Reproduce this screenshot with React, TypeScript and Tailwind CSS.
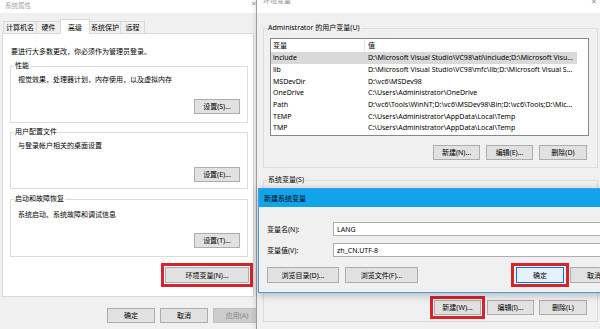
import type { ReactNode } from "react";

const userVars = [
  { name: "include", value: "D:\\Microsoft Visual Studio\\VC98\\atl\\include;D:\\Microsoft Visu...", selected: true },
  { name: "lib", value: "D:\\Microsoft Visual Studio\\VC98\\mfc\\lib;D:\\Microsoft Visual S..." },
  { name: "MSDevDir", value: "D:\\vc6\\MSDev98" },
  { name: "OneDrive", value: "C:\\Users\\Administrator\\OneDrive" },
  { name: "Path", value: "D:\\vc6\\Tools\\WinNT;D:\\vc6\\MSDev98\\Bin;D:\\vc6\\Tools;D:\\Mic..." },
  { name: "TEMP", value: "C:\\Users\\Administrator\\AppData\\Local\\Temp" },
  { name: "TMP", value: "C:\\Users\\Administrator\\AppData\\Local\\Temp" },
];

interface BtnProps {
  label: string;
  className?: string;
  disabled?: boolean;
  focused?: boolean;
}

const Btn = ({ label, className = "", disabled, focused }: BtnProps) => {
  const look = disabled
    ? "bg-[#cccccc] border-[#bfbfbf] text-[#8a8a8a]"
    : focused
      ? "bg-[#e5f1fb] border-[#0078d7] text-black"
      : "bg-[#e1e1e1] border-[#adadad] text-black";
  return (
    <div className={`flex shrink-0 items-center justify-center border text-[7px] leading-none ${look} ${className}`}>
      {label}
    </div>
  );
};

// red highlight frame drawn round a button
const RedBox = ({ children, className = "" }: { children: ReactNode; className?: string }) => (
  <div className={`flex shrink-0 items-center justify-center border-[3px] border-[#d8232a] ${className}`}>{children}</div>
);

const Group = ({ title, className = "", children }: { title: string; className?: string; children: ReactNode }) => (
  <fieldset className={`border border-[#dcdcdc] ${className}`}>
    <legend className="ml-[3px] px-[1px] text-[7px] leading-[10px]">{title}</legend>
    <div className="flex flex-col">{children}</div>
  </fieldset>
);

const tabs = [
  { label: "计算机名", w: "w-[34px]" },
  { label: "硬件", w: "w-[25px]" },
  { label: "高级", w: "w-[30px]", active: true },
  { label: "系统保护", w: "w-[32px]" },
  { label: "远程", w: "w-[25px]" },
];

const SystemProperties = () => (
  <div className="absolute left-0 top-0 flex h-[329px] w-[262px] flex-col bg-[#f0f0f0]">
    <div className="flex h-[13px] items-center justify-between bg-white pl-[5px] pr-[5px]">
      <span className="text-[6.5px] leading-none text-[#a3a3a3]">系统属性</span>
      <span className="-mt-[6px] text-[7px] leading-none text-[#a3a3a3]">✕</span>
    </div>

    <div className="flex h-[20px] items-end pl-[3px]">
      {tabs.map((t, i) =>
        t.active ? (
          <div
            key={t.label}
            className={`relative z-10 -mb-px flex h-[15px] items-center justify-center border border-b-0 border-[#d9d9d9] bg-white text-[7px] leading-none ${t.w} ${i ? "-ml-px" : ""}`}
          >
            {t.label}
          </div>
        ) : (
          <div
            key={t.label}
            className={`flex h-[12px] items-center justify-center border border-b-0 border-[#d9d9d9] bg-[#f0f0f0] text-[7px] leading-none ${t.w} ${i ? "-ml-px" : ""}`}
          >
            {t.label}
          </div>
        ),
      )}
    </div>

    <div className="ml-[2px] flex h-[264px] w-[252px] flex-col border border-[#d9d9d9] bg-white">
      <p className="ml-[8px] mt-[13px] h-[10px] text-[7px] leading-[10px]">要进行大多数更改，你必须作为管理员登录。</p>

      <Group title="性能" className="ml-[7px] mt-[4px] w-[238px]">
        <p className="ml-[7px] mt-[4px] h-[10px] text-[7px] leading-[10px]">视觉效果，处理器计划，内存使用，以及虚拟内存</p>
        <Btn label="设置(S)..." className="mb-[8px] mr-[7px] mt-[14px] h-[15px] w-[46px] self-end" />
      </Group>

      <Group title="用户配置文件" className="ml-[7px] mt-[4px] w-[238px]">
        <p className="ml-[7px] mt-[4px] h-[10px] text-[7px] leading-[10px]">与登录帐户相关的桌面设置</p>
        <Btn label="设置(E)..." className="mb-[6px] mr-[7px] mt-[16px] h-[15px] w-[46px] self-end" />
      </Group>

      <Group title="启动和故障恢复" className="ml-[7px] mt-[5px] w-[238px]">
        <p className="ml-[7px] mt-[6px] h-[10px] text-[7px] leading-[10px]">系统启动、系统故障和调试信息</p>
        <Btn label="设置(T)..." className="mb-[8px] mr-[7px] mt-[13px] h-[15px] w-[46px] self-end" />
      </Group>

      <RedBox className="ml-[158px] mt-[6px] h-[24px] w-[92px]">
        <Btn label="环境变量(N)..." className="h-[16px] w-[84px]" />
      </RedBox>
    </div>

    <div className="ml-[107px] mt-[11px] flex gap-[5px]">
      <Btn label="确定" className="h-[15px] w-[48px]" />
      <Btn label="取消" className="h-[15px] w-[48px]" />
      <Btn label="应用(A)" className="h-[15px] w-[48px]" disabled />
    </div>
  </div>
);

const EnvVariables = () => (
  <div className="absolute left-[256px] top-0 flex h-[329px] w-[350px] flex-col border-l border-[#9c9c9c] bg-[#f0f0f0] shadow-[-2px_0_4px_rgba(0,0,0,0.08)]">
    <div className="flex h-[13px] items-start justify-between overflow-hidden bg-white pl-[6px] pr-[9px]">
      <span className="-mt-[4px] text-[7px] leading-[10px] text-[#8c8c8c]">环境变量</span>
      <span className="-mt-[3px] text-[7px] leading-[10px] text-[#8c8c8c]">✕</span>
    </div>

    <div className="flex flex-col pl-[6px]">
      <Group title="Administrator 的用户变量(U)" className="mt-[10px] w-[335px]">
        <div className="ml-[6px] mt-[5px] h-[98px] w-[319px] overflow-hidden border border-[#828790] bg-white text-[7px] leading-none">
          <div className="flex h-[13px] w-[306px] items-center">
            <span className="flex h-full w-[94px] items-center border-r border-[#e5e5e5] pl-[2px]">变量</span>
            <span className="pl-[3px]">值</span>
          </div>
          {userVars.map((v) => (
            <div
              key={v.name}
              className={`flex h-[11.7px] w-[306px] items-center whitespace-nowrap ${v.selected ? "bg-[#d9d9d9]" : ""}`}
            >
              <span className="w-[94px] shrink-0 pl-[2px]">{v.name}</span>
              <span className="pl-[3px]">{v.value}</span>
            </div>
          ))}
        </div>
        <div className="mb-[7px] ml-[169px] mt-[9px] flex gap-[6px]">
          <Btn label="新建(N)..." className="h-[15px] w-[47px]" />
          <Btn label="编辑(E)..." className="h-[15px] w-[47px]" />
          <Btn label="删除(D)" className="h-[15px] w-[48px]" />
        </div>
      </Group>

      <Group title="系统变量(S)" className="mt-[7px] w-[335px]">
        <div className="h-[111px]" />
        <div className="mb-[2px] ml-[166px] flex items-center">
          <RedBox className="h-[23px] w-[55px]">
            <Btn label="新建(W)..." className="h-[15px] w-[47px]" />
          </RedBox>
          <Btn label="编辑(I)..." className="ml-[2px] h-[15px] w-[47px]" />
          <Btn label="删除(L)" className="ml-[5px] h-[15px] w-[48px]" />
        </div>
      </Group>
    </div>
  </div>
);

const NewVariableDialog = () => (
  <div className="absolute left-[258px] top-[188px] flex h-[105px] w-[360px] flex-col border border-[#3d9ee8] bg-[#f0f0f0] shadow-[0_2px_8px_rgba(0,0,0,0.25)]">
    <div className="flex h-[18px] items-center bg-[#12a4ea] pl-[5px] text-[7px] leading-none text-black">新建系统变量</div>
    <div className="flex flex-col pl-[8px] text-[7px] leading-none">
      <div className="mt-[15px] flex h-[14px] items-center">
        <span className="w-[66px]">变量名(N):</span>
        <div className="flex h-[14px] flex-1 items-center border border-[#abadb3] bg-white pl-[3px]">LANG</div>
      </div>
      <div className="mt-[7px] flex h-[14px] items-center">
        <span className="w-[66px]">变量值(V):</span>
        <div className="flex h-[14px] flex-1 items-center border border-[#abadb3] bg-white pl-[3px]">zh_CN.UTF-8</div>
      </div>
      <div className="mt-[6px] flex h-[24px] items-center">
        <Btn label="浏览目录(D)..." className="h-[16px] w-[72px]" />
        <Btn label="浏览文件(F)..." className="ml-[6px] h-[16px] w-[73px]" />
        <RedBox className="ml-[93px] h-[24px] w-[58px]">
          <Btn label="确定" className="h-[16px] w-[48px]" focused />
        </RedBox>
        <Btn label="取消" className="ml-[1px] h-[16px] w-[48px]" />
      </div>
    </div>
  </div>
);

export default function App() {
  return (
    <div className="relative h-[329px] w-[600px] overflow-hidden bg-[#f0f0f0] font-['Noto_Sans','Noto_Sans_CJK_SC',sans-serif] text-black">
      <SystemProperties />
      <EnvVariables />
      <NewVariableDialog />
    </div>
  );
}
